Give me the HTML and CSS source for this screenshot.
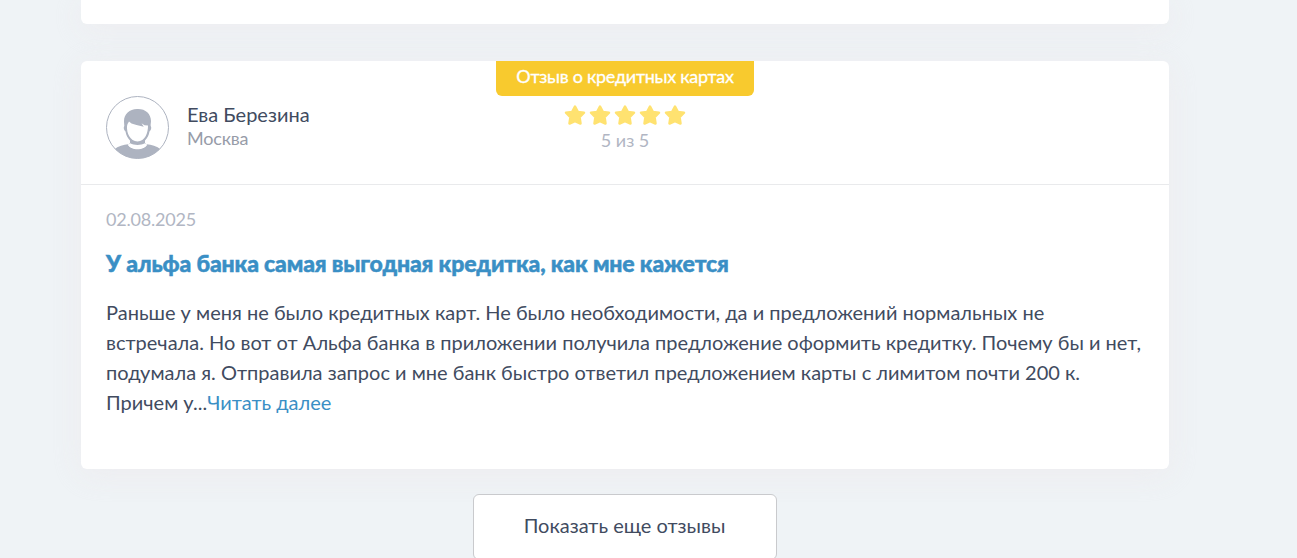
FILE: index.html
```html
<!DOCTYPE html>
<html lang="ru">
<head>
    <meta charset="UTF-8">
    <meta name="viewport" content="width=device-width, initial-scale=1.0">
    <title>Отзывы</title>
    <link rel="stylesheet" href="styles.css">
</head>
<body>
    <main class="reviews">
        <div class="review review-prev"></div>

        <article class="review">
            <header class="review-head">
                <div class="author">
                    <svg class="avatar" viewBox="0 0 63 63" width="63" height="63">
                        <clipPath id="avatar-clip"><circle cx="31.5" cy="31.5" r="31"/></clipPath>
                        <g clip-path="url(#avatar-clip)" fill="#adb3c0">
                            <path d="M8 54C12 49.8 18 48.8 22 48.3C25 55 38 55 41 48.3C45 48.8 51 49.8 55 54V63H8Z"/>
                            <path d="M31 13C39 12.5 45 17.500 45 25C45 27 44.500 28 44.700 30C45.800 31 45.200 34.500 43.500 35.500C42.800 39.500 41.500 42 39 44.500V46.500C39 47.500 39.800 48 41 48.300L39.500 50H23.500L22 48.300C23.200 48 24 47.500 24 46.500V44.500C21.500 42 20.200 39.500 19.500 35.500C17.800 34.500 17.200 31 18.300 30C18.300 28 18 27 18 25C18 18 23.500 13.200 31 13Z"/>
                            <path fill="#fff" d="M23 25.5L25.500 27.600L30.500 29L37.800 30.800L35.500 27.300L38.500 29.200L42 29.500C42.200 36.500 39 45.500 31.500 45.500C24 45.500 20.500 36.500 21 30.500C21.200 28.500 22 27 23 25.500Z"/>
                            <path fill="#fff" d="M24.200 47.300C28 49.500 35 49.500 38.800 47.300C39.200 48 40 48.300 41.300 48.500C38.500 54.500 24.500 54.500 21.700 48.500C23 48.300 23.800 48 24.200 47.300Z"/>
                        </g>
                        <circle cx="31.5" cy="31.5" r="31" fill="none" stroke="#adb3c0"/>
                    </svg>
                    <div>
                        <div class="author-name">Ева Березина</div>
                        <div class="author-city">Москва</div>
                    </div>
                </div>
                <div class="rating">
                    <div class="category">Отзыв о кредитных картах</div>
                    <svg class="stars" viewBox="0 0 122 22" width="122" height="22">
                        <defs>
                            <path id="star" d="M11 2.5L13.8 7.9L20 8.700L15.600 13.200L16.500 19.500L11 17L5.500 19.500L6.400 13.200L2 8.700L8.200 7.900Z"/>
                        </defs>
                        <use href="#star"/>
                        <use href="#star" x="25"/>
                        <use href="#star" x="50"/>
                        <use href="#star" x="75"/>
                        <use href="#star" x="100"/>
                    </svg>
                    <div class="score">5 из 5</div>
                </div>
            </header>
            <div class="review-body">
                <div class="date">02.08.2025</div>
                <h2 class="title">У альфа банка самая выгодная кредитка, как мне кажется</h2>
                <p class="text">Раньше у меня не было кредитных карт. Не было необходимости, да и предложений нормальных не встречала. Но вот от Альфа банка в приложении получила предложение оформить кредитку. Почему бы и нет, подумала я. Отправила запрос и мне банк быстро ответил предложением карты с лимитом почти 200 к. Причем у...<a class="more" href="#">Читать далее</a></p>
            </div>
        </article>

        <button class="show-more" type="button">Показать еще отзывы</button>
    </main>
</body>
</html>
```
FILE: styles.css
```css
* {
    box-sizing: border-box;
}
body {
    margin: 0;
    background-color: #eff3f6;
    font-family: Lato, sans-serif;
    color: #414b5f;
}
.reviews {
    display: flex;
    flex-direction: column;
    height: 558px;
    padding: 0 128px 0 81px;
    overflow: hidden;
}
.review {
    flex: none;
    height: 408px;
    margin-bottom: 25px;
    background-color: #fff;
    border-radius: 6px;
    box-shadow: 0 5px 30px rgba(237, 232, 235, 0.6);
}
.review-prev {
    height: 24px;
    margin-bottom: 37px;
    border-radius: 0 0 6px 6px;
}
.review-head {
    display: grid;
    grid-template-columns: 1fr auto 1fr;
    height: 124px;
    padding: 0 25px;
    border-bottom: 1px solid #e9eaec;
}
.author {
    display: flex;
    align-items: flex-start;
    gap: 18px;
    padding-top: 35px;
}
.author-name {
    margin-top: 6px;
    font-size: 20px;
    line-height: 24px;
}
.author-city {
    font-size: 18px;
    line-height: 24px;
    letter-spacing: -0.2px;
    color: #979ca8;
}
.rating {
    display: flex;
    flex-direction: column;
    align-items: center;
}
.category {
    width: 258px;
    height: 35px;
    background-color: #f8ca2e;
    border-radius: 0 0 6px 6px;
    color: #fff;
    font-size: 18px;
    letter-spacing: -0.28px;
    line-height: 30px;
    text-align: center;
    white-space: nowrap;
    -webkit-text-stroke: 0.3px #fff;
}
.stars {
    margin-top: 8px;
    fill: #ffe270;
    stroke: #ffe270;
    stroke-width: 2.5;
    stroke-linejoin: round;
}
.score {
    margin-top: 3px;
    font-size: 18px;
    line-height: 22px;
    color: #b1b6c3;
}
.review-body {
    padding: 23px 25px 0;
}
.date {
    font-size: 18px;
    line-height: 22px;
    letter-spacing: -0.2px;
    color: #b1b6c3;
}
.title {
    margin: 18px 0 19px;
    font-size: 23px;
    font-weight: 900;
    line-height: 30px;
    letter-spacing: -0.15px;
    color: #3a8fc5;
    -webkit-text-stroke: 0.5px #3a8fc5;
}
.text {
    margin: 0;
    font-size: 20px;
    line-height: 30px;
}
.more {
    display: inline-block;
    color: #3a8fc5;
    text-decoration: none;
}
.show-more {
    flex: none;
    align-self: center;
    width: 304px;
    height: 66px;
    padding: 0 7px 4px 6px;
    background-color: #fff;
    border: 1px solid #c9cacd;
    border-radius: 6px;
    color: #414b5f;
    font-family: inherit;
    font-size: 20px;
    z-index: 1;
}
```
